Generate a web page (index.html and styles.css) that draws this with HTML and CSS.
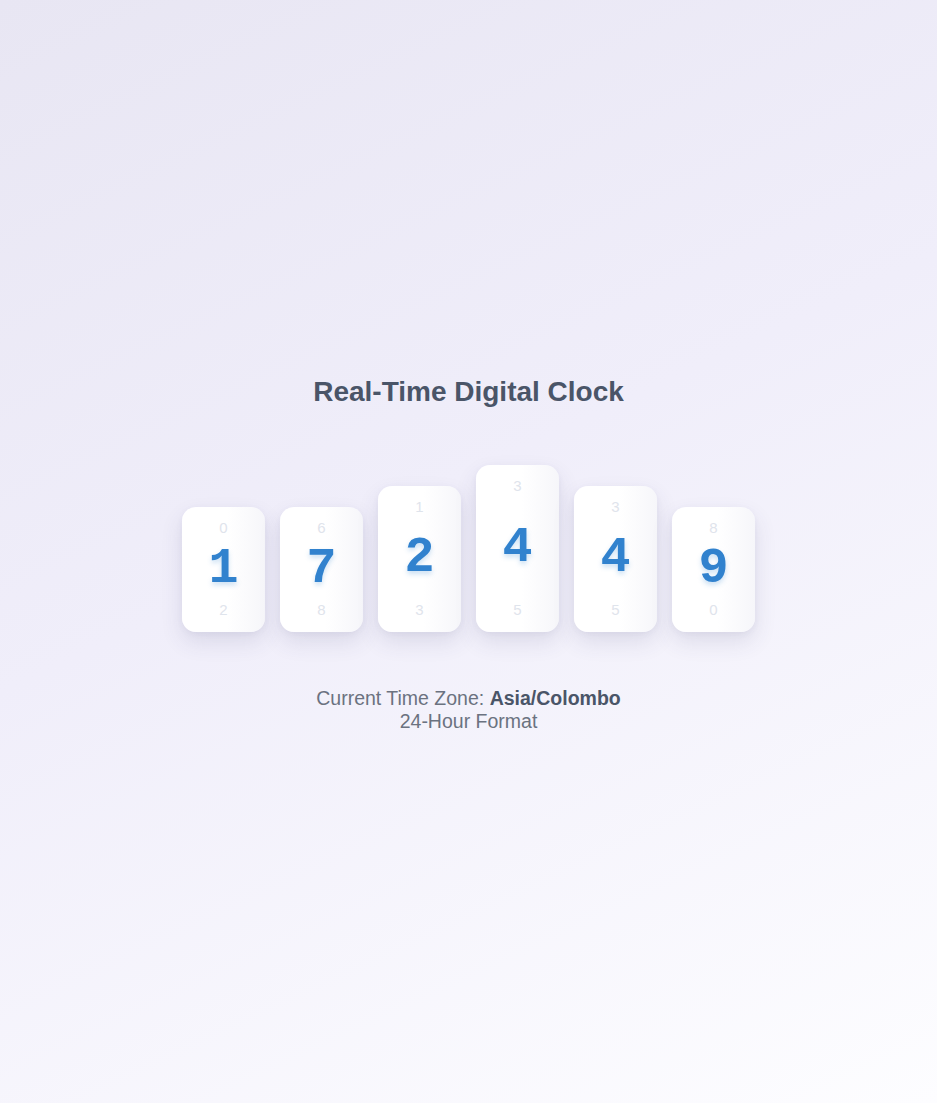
FILE: index.html
```html
<!DOCTYPE html>
<html lang="en">
<head>
<meta charset="utf-8">
<title>Real-Time Digital Clock</title>
<link rel="stylesheet" href="styles.css">
</head>
<body>
<main class="page">
  <h1 class="title">Real-Time Digital Clock</h1>
  <div class="clock">
    <div class="card card-s"><span class="minor">0</span><span class="major">1</span><span class="minor">2</span></div>
    <div class="card card-s"><span class="minor">6</span><span class="major">7</span><span class="minor">8</span></div>
    <div class="card card-m"><span class="minor">1</span><span class="major">2</span><span class="minor">3</span></div>
    <div class="card card-l"><span class="minor">3</span><span class="major">4</span><span class="minor">5</span></div>
    <div class="card card-m"><span class="minor">3</span><span class="major">4</span><span class="minor">5</span></div>
    <div class="card card-s"><span class="minor">8</span><span class="major">9</span><span class="minor">0</span></div>
  </div>
  <div class="info">
    <div>Current Time Zone: <strong>Asia/Colombo</strong></div>
    <div>24-Hour Format</div>
  </div>
</main>
</body>
</html>
```
FILE: styles.css
```css
html, body {
  margin: 0;
  padding: 0;
  height: 100%;
}
body {
  font-family: "Liberation Sans", Arial, sans-serif;
  background: linear-gradient(155deg, #e8e6f3 0%, #f0eefa 45%, #fdfdff 100%);
  min-height: 100vh;
}
.page {
  min-height: 100vh;
  box-sizing: border-box;
  padding-top: 5px;
  display: flex;
  flex-direction: column;
  align-items: center;
  justify-content: center;
}
.title {
  margin: 0 0 57px;
  font-size: 28px;
  line-height: 32px;
  font-weight: 700;
  color: #4a5568;
}
.clock {
  display: flex;
  align-items: flex-end;
  gap: 15px;
  margin-bottom: 55px;
}
.card {
  width: 83px;
  box-sizing: border-box;
  background: linear-gradient(90deg, #ffffff 0%, #ffffff 55%, #f6f6fa 100%);
  border-radius: 14px;
  box-shadow: 0 10px 22px rgba(60, 60, 110, 0.12), 0 2px 6px rgba(60, 60, 110, 0.05);
  display: flex;
  flex-direction: column;
  align-items: center;
  justify-content: space-between;
  padding: 12px 0 13px;
}
.card-s { height: 125px; }
.card-m { height: 146px; }
.card-l { height: 167px; }
.minor {
  font-size: 15px;
  line-height: 18px;
  color: #dfe4ec;
}
.major {
  font-family: "Liberation Mono", "Courier New", monospace;
  font-weight: 700;
  font-size: 50px;
  line-height: 50px;
  color: #3182ce;
  text-shadow: 0 3px 5px rgba(49, 130, 206, 0.25);
}
.info {
  text-align: center;
  font-size: 19.5px;
  line-height: 23px;
  color: #6b7280;
}
.info strong {
  color: #4a5568;
  font-weight: 700;
}
```
